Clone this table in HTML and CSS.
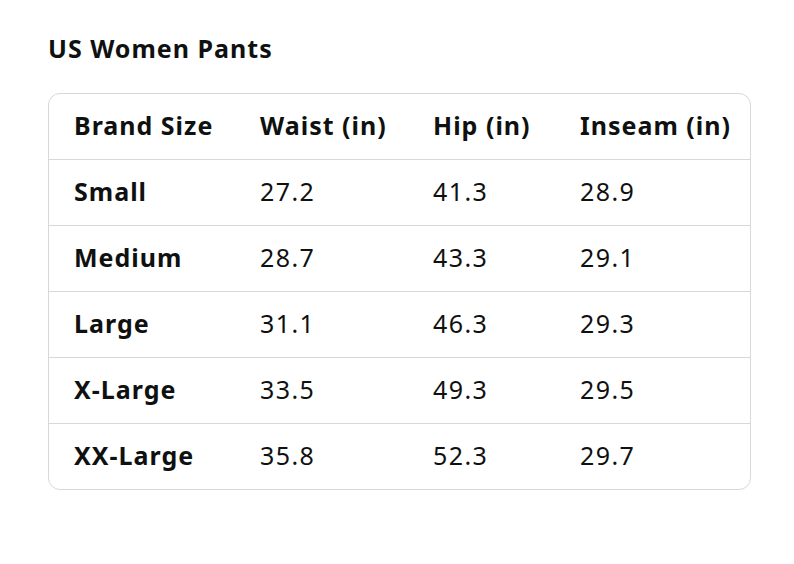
FILE: index.html
```html
<!DOCTYPE html>
<html>
<head>
<meta charset="utf-8">
<link rel="stylesheet" href="styles.css">
</head>
<body>
<div class="page">
  <h2 class="title">US Women Pants</h2>
  <div class="table">
    <div class="row head">
      <div class="cell">Brand Size</div>
      <div class="cell">Waist (in)</div>
      <div class="cell">Hip (in)</div>
      <div class="cell">Inseam (in)</div>
    </div>
    <div class="row">
      <div class="cell label">Small</div>
      <div class="cell">27.2</div>
      <div class="cell">41.3</div>
      <div class="cell">28.9</div>
    </div>
    <div class="row">
      <div class="cell label">Medium</div>
      <div class="cell">28.7</div>
      <div class="cell">43.3</div>
      <div class="cell">29.1</div>
    </div>
    <div class="row">
      <div class="cell label">Large</div>
      <div class="cell">31.1</div>
      <div class="cell">46.3</div>
      <div class="cell">29.3</div>
    </div>
    <div class="row">
      <div class="cell label">X-Large</div>
      <div class="cell">33.5</div>
      <div class="cell">49.3</div>
      <div class="cell">29.5</div>
    </div>
    <div class="row">
      <div class="cell label">XX-Large</div>
      <div class="cell">35.8</div>
      <div class="cell">52.3</div>
      <div class="cell">29.7</div>
    </div>
  </div>
</div>
</body>
</html>
```
FILE: styles.css
```css
html, body {
  margin: 0;
  padding: 0;
  background: #ffffff;
}
body {
  font-family: "Noto Sans", "Open Sans", sans-serif;
  color: #0f1111;
}
.page {
  padding: 31px 0 0 48px;
}
.title {
  margin: 0 0 28px 0;
  font-size: 25px;
  line-height: 34px;
  font-weight: 700;
  letter-spacing: 1px;
}
.table {
  width: 703px;
  box-sizing: border-box;
  border: 1px solid #d5d9d9;
  border-radius: 12px;
  overflow: hidden;
}
.row {
  display: grid;
  grid-template-columns: 186px 173px 147px 1fr;
  height: 66px;
  align-items: center;
  border-top: 1px solid #d5d9d9;
  box-sizing: border-box;
}
.row.head {
  border-top: none;
  height: 65px;
}
.cell {
  padding-left: 25px;
  padding-bottom: 3px;
  font-size: 25px;
  line-height: 32px;
  letter-spacing: 1.4px;
}
.head .cell, .cell.label {
  font-weight: 700;
  letter-spacing: 1px;
}
```
